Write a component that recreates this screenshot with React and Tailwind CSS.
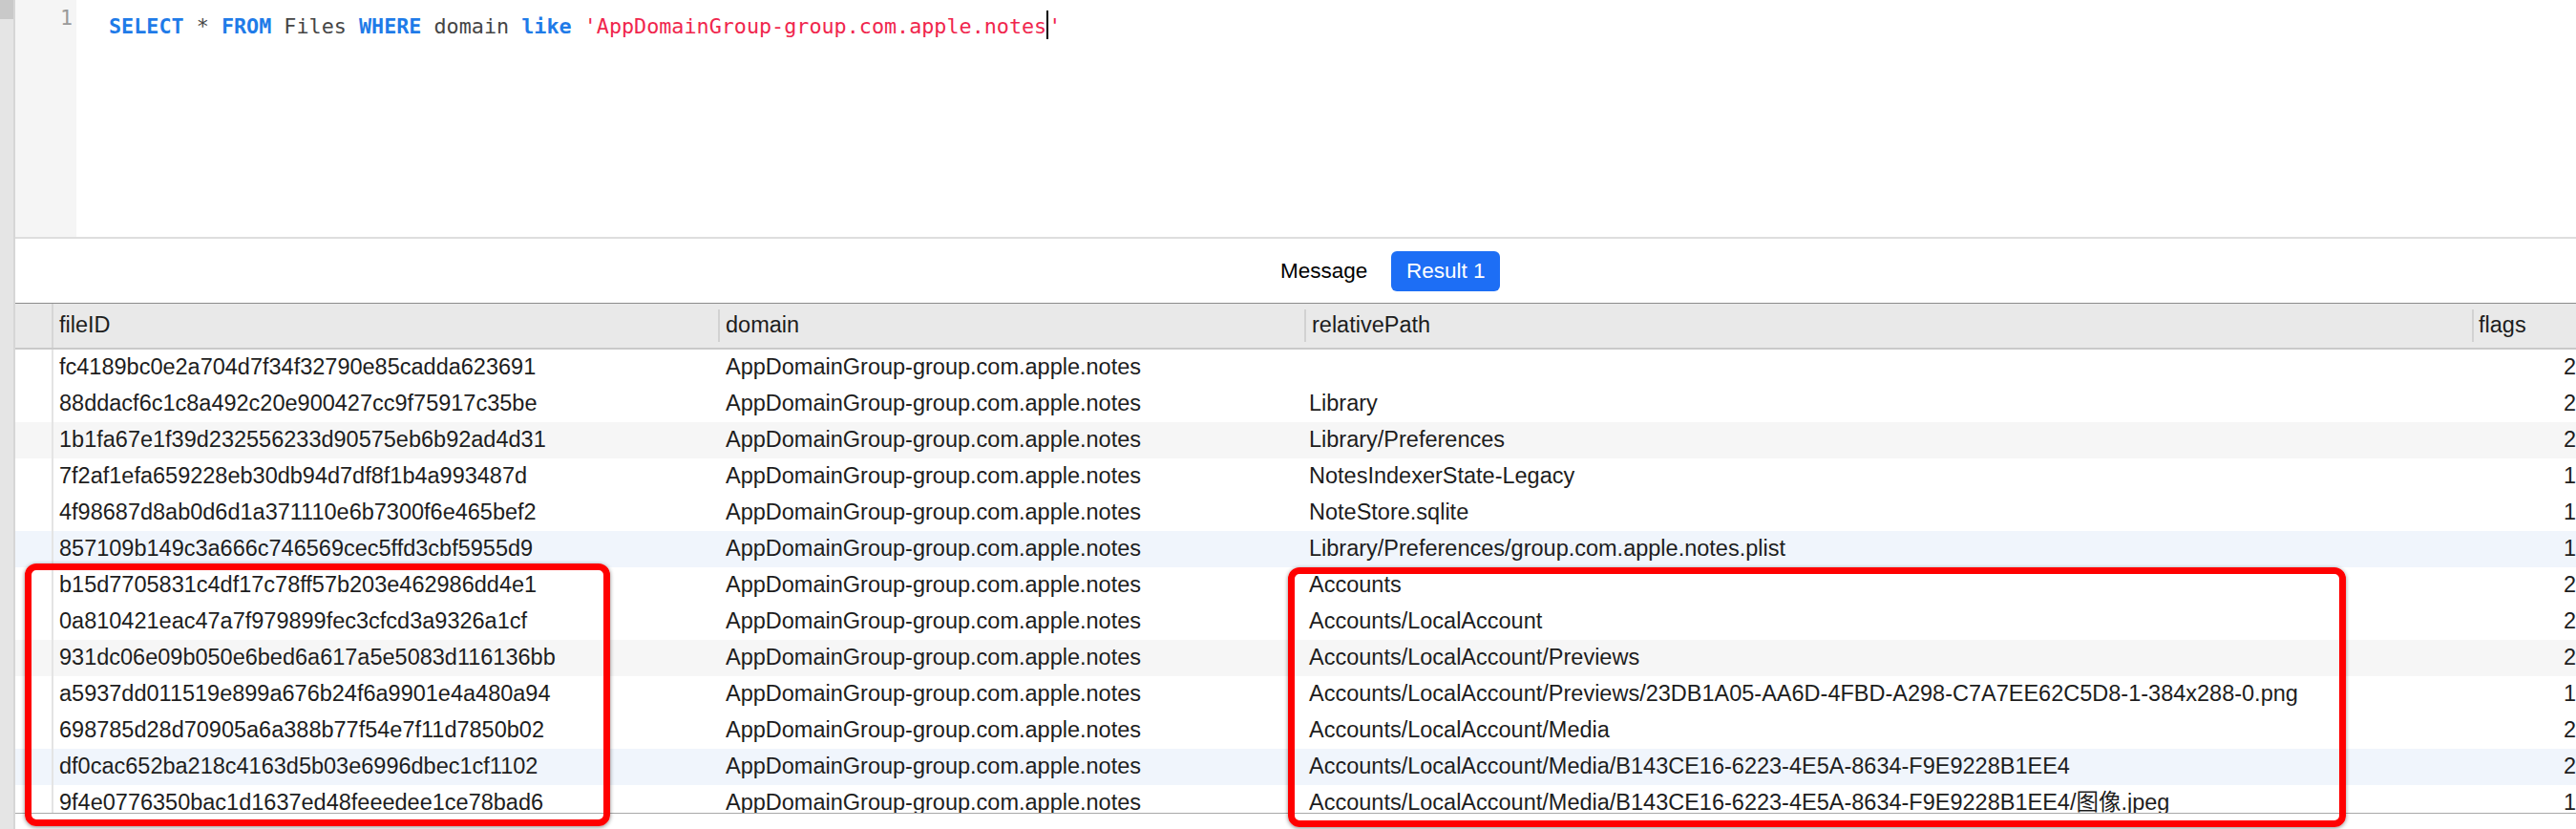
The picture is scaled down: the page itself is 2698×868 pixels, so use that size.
import React from "react";

const rows = [
  ["fc4189bc0e2a704d7f34f32790e85cadda623691", "", "2"],
  ["88ddacf6c1c8a492c20e900427cc9f75917c35be", "Library", "2"],
  ["1b1fa67e1f39d232556233d90575eb6b92ad4d31", "Library/Preferences", "2"],
  ["7f2af1efa659228eb30db94d7df8f1b4a993487d", "NotesIndexerState-Legacy", "1"],
  ["4f98687d8ab0d6d1a371110e6b7300f6e465bef2", "NoteStore.sqlite", "1"],
  ["857109b149c3a666c746569cec5ffd3cbf5955d9", "Library/Preferences/group.com.apple.notes.plist", "1"],
  ["b15d7705831c4df17c78ff57b203e462986dd4e1", "Accounts", "2"],
  ["0a810421eac47a7f979899fec3cfcd3a9326a1cf", "Accounts/LocalAccount", "2"],
  ["931dc06e09b050e6bed6a617a5e5083d116136bb", "Accounts/LocalAccount/Previews", "2"],
  ["a5937dd011519e899a676b24f6a9901e4a480a94", "Accounts/LocalAccount/Previews/23DB1A05-AA6D-4FBD-A298-C7A7EE62C5D8-1-384x288-0.png", "1"],
  ["698785d28d70905a6a388b77f54e7f11d7850b02", "Accounts/LocalAccount/Media", "2"],
  ["df0cac652ba218c4163d5b03e6996dbec1cf1102", "Accounts/LocalAccount/Media/B143CE16-6223-4E5A-8634-F9E9228B1EE4", "2"],
  ["9f4e0776350bac1d1637ed48feeedee1ce78bad6", "Accounts/LocalAccount/Media/B143CE16-6223-4E5A-8634-F9E9228B1EE4/图像.jpeg", "1"],
];

const DOMAIN = "AppDomainGroup-group.com.apple.notes";

function rowBg(i) {
  if (i % 6 === 2) return "bg-[#f6f6f6]";
  if (i % 6 === 5) return "bg-[#f0f5fc]";
  return "bg-white";
}

export default function App() {
  return (
    <div className="relative flex h-[868px] w-full overflow-hidden bg-white text-[#1d1d1d] [font-family:'Liberation_Sans','Noto_Sans_CJK_SC',sans-serif]">
      {/* Left strip */}
      <div className="flex w-[16px] shrink-0 flex-col border-r-2 border-[#d6d6d6] bg-[#e5e5e5]">
        <div className="h-[20px] bg-[#c9c9c9]" />
      </div>

      <div className="flex min-w-0 flex-1 flex-col">
        {/* Editor */}
        <div className="flex h-[248px] shrink-0">
          <div className="w-[64px] shrink-0 bg-[#f5f5f5] pr-[4px] pt-[5px] text-right text-[21.75px] leading-[28px] text-[#9a9a9a] [font-family:'DejaVu_Sans_Mono',monospace]">
            1
          </div>
          <div className="flex-1 whitespace-pre pl-[34px] pt-[5px] text-[21.75px] leading-[28px] text-[#454545] [font-family:'DejaVu_Sans_Mono',monospace]">
            <span className="font-bold text-[#1f7be8]">SELECT</span>
            {" * "}
            <span className="font-bold text-[#1f7be8]">FROM</span>
            {" Files "}
            <span className="font-bold text-[#1f7be8]">WHERE</span>
            {" domain "}
            <span className="font-bold text-[#1f7be8]">like</span>{" "}
            <span className="text-[#f0264d]">'{DOMAIN}</span>
            <span className="inline-block h-[30px] w-[2px] translate-y-[6px] bg-black" />
            <span className="text-[#f0264d]">'</span>
          </div>
        </div>
        <div className="h-[2px] shrink-0 bg-[#dedede]" />

        {/* Tabs */}
        <div className="flex h-[67px] shrink-0 items-center pl-[1325px] text-[22.5px]">
          <span className="text-black">Message</span>
          <button className="ml-[25px] flex h-[42px] w-[114px] items-center justify-center rounded-[6px] bg-[#1d6ef5] text-white">
            Result 1
          </button>
        </div>
        <div className="h-px shrink-0 bg-[#8c8c8c]" />

        {/* Header */}
        <div className="flex h-[48px] shrink-0 border-b-2 border-[#c9c9c9] bg-[#e9e9e9] text-[23.5px]">
          <div className="w-[40px] shrink-0 border-r-2 border-[#d6d6d6]" />
          <div className="flex w-[696px] shrink-0 items-center pl-[6px]">fileID</div>
          <div className="flex w-[614px] shrink-0 items-center">
            <span className="h-[34px] w-[2px] bg-[#d2d2d2]" />
            <span className="pl-[6px]">domain</span>
          </div>
          <div className="flex w-[1223px] shrink-0 items-center">
            <span className="h-[34px] w-[2px] bg-[#d2d2d2]" />
            <span className="pl-[6px]">relativePath</span>
          </div>
          <div className="flex flex-1 items-center">
            <span className="h-[34px] w-[2px] bg-[#d2d2d2]" />
            <span className="pl-[5px]">flags</span>
          </div>
        </div>

        {/* Body */}
        <div className="h-[485px] shrink-0 overflow-hidden text-[23.5px]">
          {rows.map(([id, path, flags], i) => (
            <div key={id} className={`flex h-[38px] items-center ${rowBg(i)}`}>
              <div className="h-full w-[40px] shrink-0 border-r-2 border-[#e4e4e4]" />
              <div className="w-[696px] shrink-0 truncate pl-[6px]">{id}</div>
              <div className="w-[614px] shrink-0 truncate pl-[8px]">{DOMAIN}</div>
              <div className="w-[1223px] shrink-0 truncate whitespace-nowrap pl-[5px]">{path}</div>
              <div className="w-[109px] shrink-0 text-right">{flags}</div>
            </div>
          ))}
        </div>
        <div className="h-px shrink-0 bg-[#a9a9a9]" />
        <div className="flex-1 bg-white" />
      </div>

      {/* Annotation boxes */}
      <div className="absolute left-[26px] top-[590px] h-[275px] w-[613px] rounded-[12px] border-[7px] border-[#ff0000] shadow-[0_1px_4px_rgba(0,0,0,0.45)]" />
      <div className="absolute left-[1349px] top-[594px] h-[272px] w-[1108px] rounded-[12px] border-[7px] border-[#ff0000] shadow-[0_1px_4px_rgba(0,0,0,0.45)]" />
    </div>
  );
}
